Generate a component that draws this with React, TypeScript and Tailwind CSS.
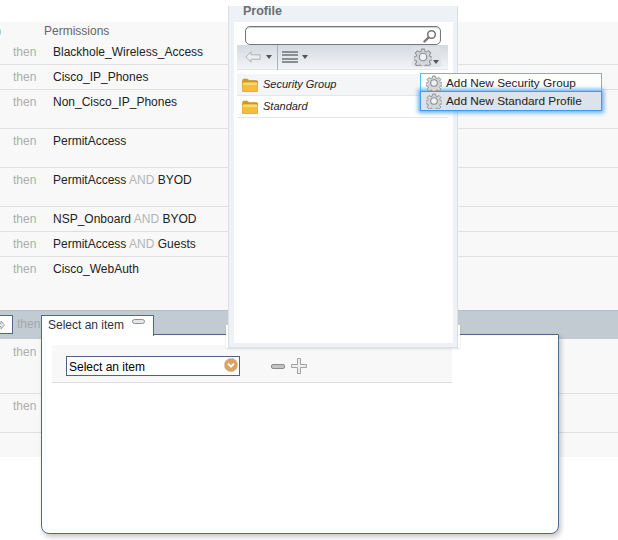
import { ReactNode } from "react";

const AND = () => <span className="text-[#b4b4b4]"> AND </span>;

const rows: { h: string; content: ReactNode }[] = [
  { h: "h-[25px]", content: "Blackhole_Wireless_Access" },
  { h: "h-[25px]", content: "Cisco_IP_Phones" },
  { h: "h-[39px]", content: "Non_Cisco_IP_Phones" },
  { h: "h-[39px]", content: "PermitAccess" },
  { h: "h-[39px]", content: <>PermitAccess<AND />BYOD</> },
  { h: "h-[25px]", content: <>NSP_Onboard<AND />BYOD</> },
  { h: "h-[25px]", content: <>PermitAccess<AND />Guests</> },
];

function Row({ h, children, last, pad = "pt-1" }: { h: string; children?: ReactNode; last?: boolean; pad?: string }) {
  return (
    <div className={`flex leading-4 ${pad} ${h} ${last ? "" : "border-b border-[#dfdfdf]"}`}>
      <span className="w-[53px] pl-[13px] text-[#adadad]">then</span>
      <span className="text-[#222]">{children}</span>
    </div>
  );
}

function Gear({ className }: { className: string }) {
  return (
    <svg viewBox="0 0 24 24" className={className}>
      <path
        d="M10 1.5h4l.7 3.2 1.9.8 2.8-1.8 2.9 2.9-1.8 2.8.8 1.9 3.2.7v4l-3.2.7-.8 1.9 1.8 2.8-2.9 2.9-2.8-1.8-1.9.8-.7 3.2h-4l-.7-3.2-1.9-.8-2.8 1.8-2.9-2.9 1.8-2.8-.8-1.9-3.2-.7v-4l3.2-.7.8-1.9-1.8-2.8 2.9-2.9 2.8 1.8 1.9-.8z"
        fill="#d4d6d8"
        stroke="#8e9296"
        strokeWidth="1.4"
        strokeLinejoin="round"
      />
      <circle cx="12" cy="12" r="5" fill="#f0f1f2" stroke="#8a8e92" strokeWidth="1.6" />
    </svg>
  );
}

function Folder() {
  return (
    <svg viewBox="0 0 16 14" className="w-4 h-[14px] shrink-0">
      <path d="M0.5 2.5q0-1.5 1.5-1.5h3.5l1.5 1.5h7q2 0 2 1.5v1H0.5z" fill="#d99a1e" stroke="#b98519" strokeWidth="0.5" />
      <rect x="0.25" y="4" width="15.5" height="9.75" rx="1" fill="#f7bd3a" stroke="#b9821a" strokeWidth="0.5" />
      <rect x="1" y="4.6" width="14" height="2.5" fill="#fcd977" />
    </svg>
  );
}

function Caret({ className = "" }: { className?: string }) {
  return <span className={`w-0 h-0 border-x-[3.5px] border-x-transparent border-t-[4px] border-t-[#555] ${className}`} />;
}

export default function App() {
  return (
    <div className="relative w-[618px] h-[540px] overflow-hidden bg-white text-xs text-[#222] font-['Liberation_Sans',Arial,sans-serif]">
      {/* table behind the dialogs */}
      <div className="pt-[22px]">
        <div className="bg-[#f8f8f8]">
          <div className="flex h-[18px] pt-[1px] leading-4 text-[#666]">
            <span className="w-[44px] -ml-[3px] mr-[3px]">)</span>
            <span>Permissions</span>
          </div>
          {rows.map((r, i) => (
            <Row key={i} h={r.h}>{r.content}</Row>
          ))}
          <Row h="h-[53px]" last>Cisco_WebAuth</Row>
          <div className="flex h-[29px] items-end bg-[#c2cad2] border-t border-[#b6bec6]">
            <div className="w-[13px] h-[19px] mb-[5px] bg-white border border-l-0 border-[#4d6a8a] flex items-center overflow-hidden">
              <svg viewBox="0 0 8 10" className="w-2 h-[10px] -ml-[3px]">
                <path d="M1 3.5h3V1l3.5 4L4 9V6.5H1z" fill="#e6e8ea" stroke="#8f9398" strokeWidth="0.8" />
              </svg>
            </div>
            <span className="ml-1 mb-[7px] leading-4 text-[#a4a8ac]">then</span>
          </div>
          <Row h="h-[55px]" pad="pt-[5px]"><span /></Row>
          <Row h="h-[39px]"><span /></Row>
          <div className="h-6" />
        </div>
      </div>

      {/* select item dialog */}
      <div className="absolute left-[41px] top-[334px] w-[518px] h-[200px] z-10 bg-white border border-[#4d6a8a] rounded-b-lg shadow-[2px_3px_5px_rgba(0,0,0,0.22)] pl-[10px] pt-[10px]">
        <div className="absolute -left-px -top-[20px] w-[113px] h-[21px] bg-white border border-b-0 border-[#4d6a8a] flex items-start pl-[6px] pt-[1px] leading-4">
          <span className="text-[#2a3440]">Select an item</span>
          <span className="ml-2 mt-[2px] w-[13px] h-[5px] rounded-full bg-[#e4e6e8] border border-[#8c9196]" />
        </div>
        <div className="w-[400px] h-[38px] bg-[#f8f8f8] border-b border-[#dddddd] flex items-center pl-[14px] pt-[5px]">
          <div className="w-[174px] h-5 bg-white border border-[#4d6480] flex items-center justify-between pl-[2px] pr-[1px] leading-4 text-black">
            <span className="pt-[1px]">Select an item</span>
            <svg viewBox="0 0 14 14" className="w-[14px] h-[14px] -mt-[2px]">
              <circle cx="7" cy="7" r="6.7" fill="#dea45f" stroke="#cfc3ae" strokeWidth="0.6" />
              <path d="M4 5.6 7 8.6 10 5.6" fill="none" stroke="#fff" strokeWidth="2" />
            </svg>
          </div>
          <svg viewBox="0 0 14 5" className="ml-[31px] w-[14px] h-[5px]">
            <rect x="0.5" y="0.5" width="13" height="4" rx="1.5" fill="#c4c4c4" stroke="#8b8b8b" />
          </svg>
          <svg viewBox="0 0 16 16" className="ml-[6px] w-4 h-4">
            <path d="M6.5.5h3v6h6v3h-6v6h-3v-6h-6v-3h6z" fill="#eeeeee" stroke="#a3a3a3" strokeWidth="1" strokeLinejoin="round" />
          </svg>
        </div>
      </div>

      {/* white backing under the profile panel */}
      <div className="absolute left-[226px] top-[325px] w-[234px] h-[23px] z-20 bg-white shadow-[0_1px_2px_rgba(0,0,0,0.12)]" />

      {/* profile panel */}
      <div className="absolute left-[228px] top-[6px] w-[230px] h-[342px] z-20 bg-[#eef1f5] border border-[#dcdfe2] border-t-0 pl-[5px] pr-1 pb-1 flex flex-col">
        <div className="h-[16px] pl-[9px] leading-[11px] font-bold text-[#6b6f74] text-[12.5px]">Profile</div>
        <div className="flex-1 bg-white pl-[3px] pr-[5px]">
          <div className="h-[23px] pt-[4px] pl-[8px] pr-[7px]">
            <div className="h-[19px] rounded-[5px] border border-[#777] bg-white shadow-[inset_0_1px_1px_rgba(0,0,0,0.2)] flex items-center justify-end pr-[3px]">
              <svg viewBox="0 0 14 14" className="w-[14px] h-[14px]">
                <circle cx="8.5" cy="5.5" r="3.8" fill="#fff" stroke="#777" strokeWidth="1.6" />
                <path d="M5.5 8.5 1.5 12.5" stroke="#777" strokeWidth="2.4" strokeLinecap="round" />
              </svg>
            </div>
          </div>
          <div className="h-[25px] bg-gradient-to-b from-[#d3dae0] to-[#f3f5f7] border-b border-[#e3e6e9] flex items-center pl-[8px] pr-[7px]">
            <svg viewBox="0 0 16 12" className="w-4 h-3">
              <path d="M.8 6 6 .8v3h9.2v4.4H6v3z" fill="#eceeef" stroke="#aeb3b7" />
            </svg>
            <Caret className="ml-[5px]" />
            <span className="ml-[5px] w-px h-[25px] bg-[#aab2b8]" />
            <div className="ml-[4px] w-4 h-3 flex flex-col justify-between">
              <span className="h-0.5 bg-[#8a8f93]" />
              <span className="h-0.5 bg-[#8a8f93]" />
              <span className="h-0.5 bg-[#8a8f93]" />
              <span className="h-0.5 bg-[#8a8f93]" />
            </div>
            <Caret className="ml-1" />
            <div className="ml-auto w-[29px] h-5 rounded-[3px] bg-[#dfe3e7] flex items-center pl-[2px]">
              <Gear className="w-[18px] h-[18px]" />
              <Caret className="ml-[1px] mt-[9px]" />
            </div>
          </div>
          <div className="mt-1 h-[22px] bg-[#f3f5f7] border-b border-[#e3e6e9] flex items-center gap-[5px] pl-[5px] text-[11px] italic">
            <Folder />
            <span>Security Group</span>
          </div>
          <div className="h-[22px] border-b border-[#e3e6e9] flex items-center gap-[5px] pl-[5px] text-[11px] italic">
            <Folder />
            <span>Standard</span>
          </div>
        </div>
      </div>

      {/* gear dropdown menu */}
      <div className="absolute left-[420px] top-[73px] w-[182px] z-30 text-[11.8px]">
        <div className="h-[19px] bg-white border border-[#52c3ee] flex items-center gap-1 pl-[5px] leading-4">
          <Gear className="w-4 h-4 shrink-0" />
          <span>Add New Security Group</span>
        </div>
        <div className="h-5 -mt-px bg-[#dce3ea] border border-[#3f9bea] shadow-[0_0_4px_2px_rgba(70,160,240,0.8)] flex items-center gap-1 pl-[5px] leading-4">
          <Gear className="w-4 h-4 shrink-0" />
          <span>Add New Standard Profile</span>
        </div>
      </div>
    </div>
  );
}
